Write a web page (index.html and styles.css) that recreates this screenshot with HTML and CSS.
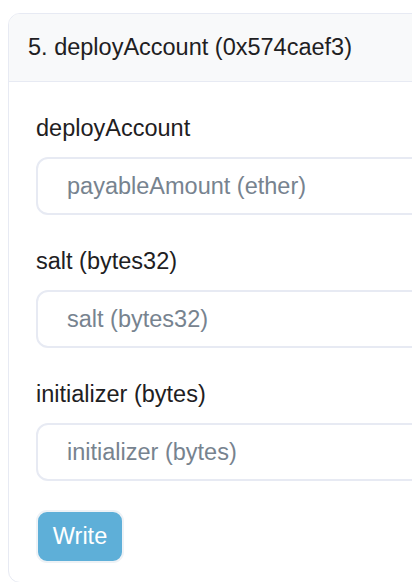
FILE: index.html
```html
<!DOCTYPE html>
<html>
<head>
<meta charset="utf-8">
<link rel="stylesheet" href="styles.css">
</head>
<body>
<div class="card">
  <div class="card-header">5. deployAccount (0x574caef3)</div>
  <div class="card-body">
    <div class="field">
      <label class="label">deployAccount</label>
      <input class="input" type="text" placeholder="payableAmount (ether)">
    </div>
    <div class="field">
      <label class="label">salt (bytes32)</label>
      <input class="input" type="text" placeholder="salt (bytes32)">
    </div>
    <div class="field">
      <label class="label">initializer (bytes)</label>
      <input class="input" type="text" placeholder="initializer (bytes)">
    </div>
    <button class="btn-write" type="button">Write</button>
  </div>
</div>
</body>
</html>
```
FILE: styles.css
```css
html, body {
  margin: 0;
  padding: 0;
  overflow: hidden;
  background: #fff;
}
body {
  padding: 13px 0 0 8px;
  font-family: "Liberation Sans", Arial, sans-serif;
  font-size: 23.5px;
  color: #1e2022;
}
.card {
  width: 520px;
  border: 1px solid #e7eaf3;
  border-radius: 12px;
  overflow: hidden;
  background: #fff;
}
.card-header {
  height: 67px;
  display: flex;
  align-items: center;
  padding: 0 19px;
  background: #f8f9fa;
  border-bottom: 1px solid #e7eaf3;
  font-size: 23.5px;
  color: #1e2022;
}
.card-body {
  padding: 29px 27px 19px;
  display: flex;
  flex-direction: column;
  align-items: flex-start;
}
.field {
  display: flex;
  flex-direction: column;
  width: 100%;
  margin-bottom: 29px;
}
.label {
  line-height: 35px;
  margin-bottom: 11px;
}
.input {
  box-sizing: border-box;
  height: 58px;
  width: 100%;
  border: 2px solid #e7eaf3;
  border-radius: 12px;
  padding: 0 29px;
  font-family: inherit;
  font-size: 23.5px;
  color: #1e2022;
  background: #fff;
  outline: none;
}
.input::placeholder {
  color: #77838f;
}
.btn-write {
  box-sizing: border-box;
  width: 88px;
  height: 53px;
  border: 2px solid #eef2f6;
  border-radius: 11px;
  background: #5eafd8;
  color: #fff;
  font-family: inherit;
  font-size: 23.5px;
  padding: 0;
  margin-top: 0;
}
```
